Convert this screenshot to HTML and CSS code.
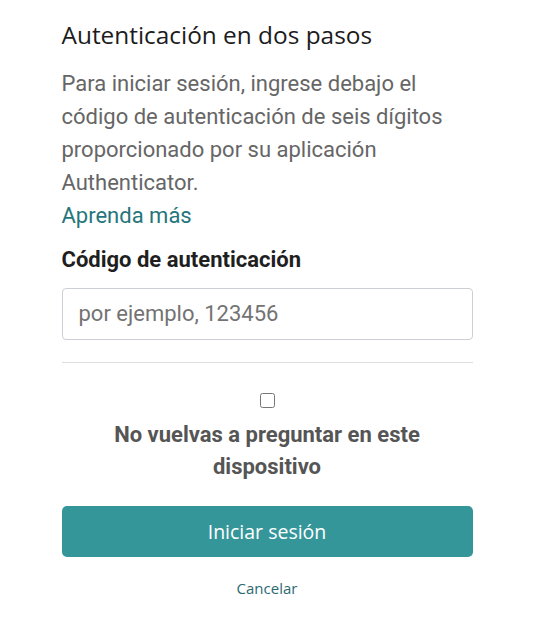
FILE: index.html
```html
<!DOCTYPE html>
<html lang="es">
<head>
<meta charset="utf-8">
<link rel="stylesheet" href="styles.css">
</head>
<body>
<main class="card">
  <h1 class="title">Autenticación en dos pasos</h1>
  <p class="intro">Para iniciar sesión, ingrese debajo el código de autenticación de seis dígitos proporcionado por su aplicación Authenticator.<br><a class="learn" href="#">Aprenda más</a></p>
  <label class="label" for="code">Código de autenticación</label>
  <input class="field" id="code" type="text" placeholder="por ejemplo, 123456">
  <hr class="divider">
  <div class="remember">
    <input class="check" type="checkbox" id="remember">
    <label class="remember-text" for="remember">No vuelvas a preguntar en este dispositivo</label>
  </div>
  <button class="submit" type="button">Iniciar sesión</button>
  <a class="cancel" href="#">Cancelar</a>
</main>
</body>
</html>
```
FILE: styles.css
```css
html, body {
  margin: 0;
  padding: 0;
  background: #fff;
}
.card {
  width: 411px;
  margin: 0 auto;
  padding-top: 19px;
  display: flex;
  flex-direction: column;
}
.title {
  margin: 0;
  font-family: "Open Sans", sans-serif;
  font-weight: 400;
  font-size: 24.4px;
  line-height: 32px;
  color: #1c1c1c;
}
.intro {
  margin: 16px 0 0;
  font-family: Roboto, sans-serif;
  font-size: 22px;
  line-height: 33px;
  color: #666;
}
.learn {
  color: #26757c;
  text-decoration: none;
}
.label {
  margin-top: 13.5px;
  font-family: Roboto, sans-serif;
  font-weight: 700;
  font-size: 22px;
  line-height: 28px;
  color: #1f1f1f;
}
.field {
  margin-top: 14px;
  box-sizing: border-box;
  height: 52px;
  width: 100%;
  border: 1px solid #ccd0d4;
  border-radius: 4px;
  padding: 0 16px;
  font-family: Roboto, sans-serif;
  font-size: 22px;
  color: #333;
}
.field::placeholder {
  color: #737373;
}
.divider {
  margin: 22px 0 0;
  border: 0;
  border-top: 1px solid #dedede;
}
.remember {
  margin-top: 30px;
  display: flex;
  flex-direction: column;
  align-items: center;
}
.check {
  margin: 0;
  width: 15px;
  height: 15px;
}
.remember-text {
  margin-top: 11px;
  font-family: Roboto, sans-serif;
  font-weight: 700;
  font-size: 22px;
  line-height: 32px;
  color: #555;
  text-align: center;
}
.submit {
  margin-top: 23px;
  height: 51px;
  border: 0;
  border-radius: 5px;
  background: #35969a;
  color: #fff;
  font-family: "Open Sans", sans-serif;
  font-size: 19.5px;
}
.cancel {
  margin-top: 21px;
  align-self: center;
  font-family: "Open Sans", sans-serif;
  font-size: 15px;
  line-height: 20px;
  color: #2c6a72;
  text-decoration: none;
}
```
